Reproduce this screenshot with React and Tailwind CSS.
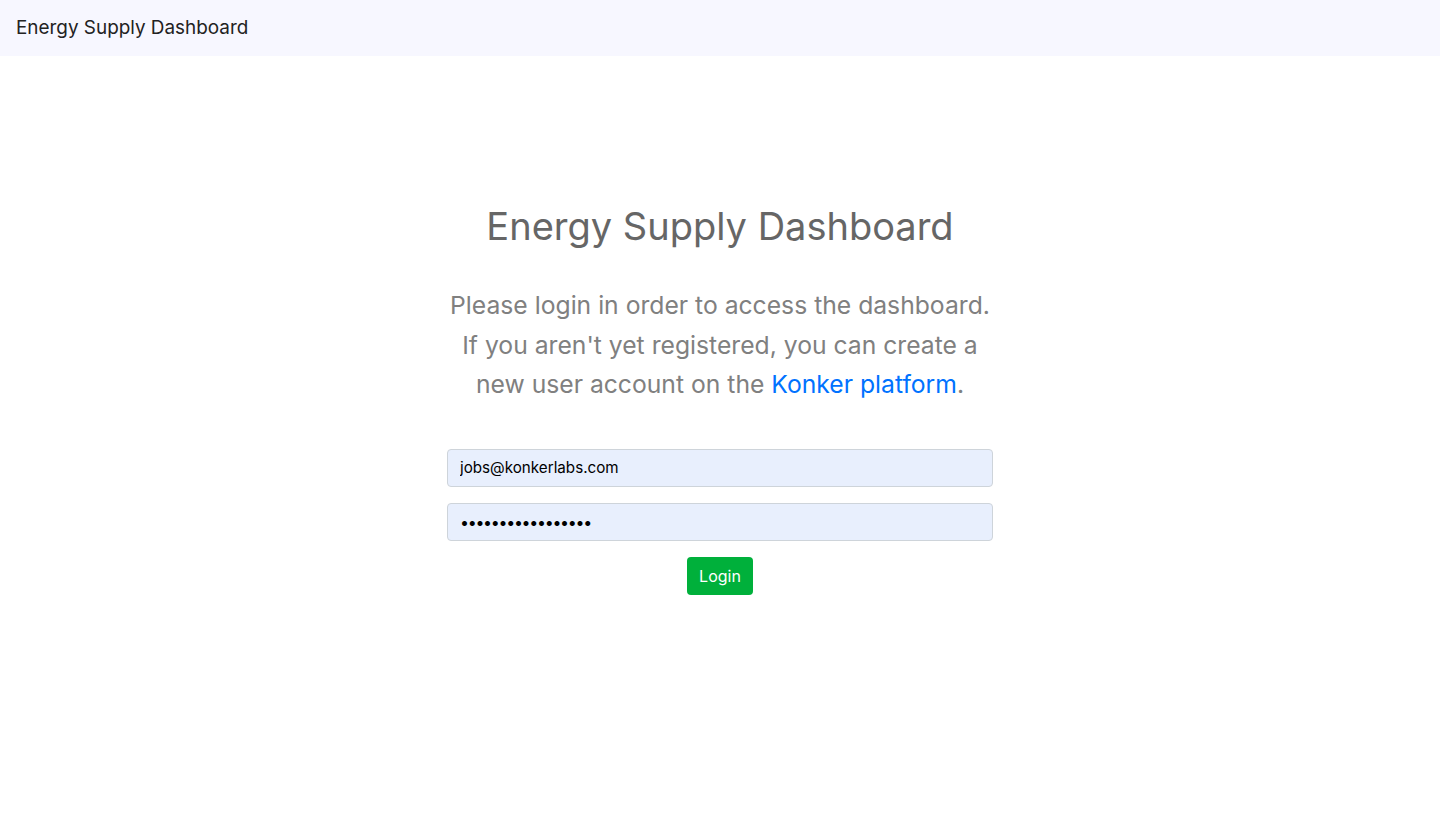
import React from 'react';

const App = () => {
  return (
    <div className="min-h-screen bg-white font-['Inter','Liberation_Sans',sans-serif]">
      {/* Navbar */}
      <nav className="h-14 bg-[#f7f7ff] flex items-center px-4">
        <span className="text-[18.9px] text-[#222]">Energy Supply Dashboard</span>
      </nav>

      <div className="flex flex-col items-center pt-[145px]">
        <h1 className="text-[38px] leading-[50px] text-[#666]">Energy Supply Dashboard</h1>
        <p className="mt-[35px] text-center text-[24.7px] leading-[39.5px] text-[#808080]">
          Please login in order to access the dashboard.
          <br />
          If you aren't yet registered, you can create a
          <br />
          new user account on the{' '}
          <a href="#" className="text-[#0072ff]">Konker platform</a>.
        </p>

        <form className="mt-[44px] w-[546px] flex flex-col items-center">
          <input
            type="text"
            defaultValue="jobs@konkerlabs.com"
            className="w-full h-[38px] px-3 bg-[#e8effd] border border-[#ced4da] rounded text-[15.2px] text-black outline-none"
          />
          <input
            type="password"
            defaultValue="konkerlabs1234567"
            className="mt-4 w-full h-[38px] px-3 bg-[#e8effd] border border-[#ced4da] rounded text-[16px] tracking-[-1.3px] text-black outline-none"
          />
          <button
            type="button"
            className="mt-4 h-[38px] px-3 bg-[#00b03b] text-white text-[16px] rounded"
          >
            Login
          </button>
        </form>
      </div>
    </div>
  );
};

export default App;
